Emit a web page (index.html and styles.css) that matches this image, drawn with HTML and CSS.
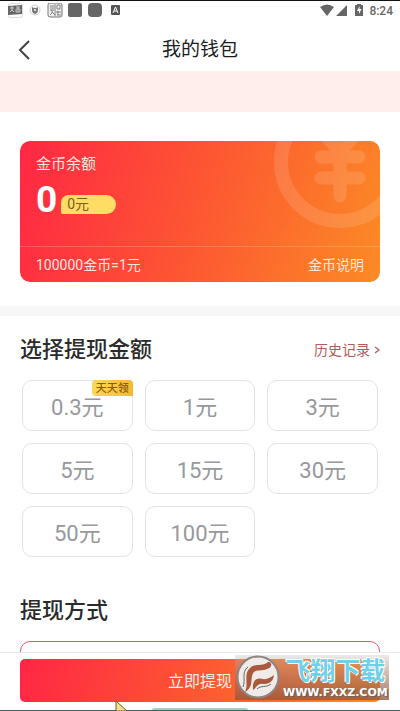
FILE: index.html
```html
<!DOCTYPE html>
<html lang="zh-CN">
<head>
<meta charset="utf-8">
<meta name="viewport" content="width=device-width, initial-scale=1">
<title>我的钱包</title>
<link rel="stylesheet" href="styles.css">
</head>
<body>
<div class="status">
  <svg class="status-left" width="112" height="16" viewBox="0 0 112 16" aria-hidden="true">
    <rect x=".5" y=".5" width="14" height="14" rx="2" fill="#fafafa" stroke="#ddd"/>
    <path d="M0 3l14-1v9l-14 1z" fill="#666"/>
    <path d="M2 5h4M4 3v4l-2 2M4 7l2 2M8 4h4M8 6h4v3H8zM10 4v5" stroke="#ddd" fill="none" stroke-width=".8"/>
    <circle cx="27" cy="7" r="5" fill="#fff" stroke="#ccc"/>
    <path d="M24 4q3 2 6 0v3q0 3-3 4-3-1-3-4z" fill="#777"/><path d="M26 6h2v2h-2z" fill="#ddd"/>
    <rect x="40" y="0" width="14" height="14" rx="2" fill="#eee" stroke="#777"/>
    <path d="M42 3h4M42 5h4M42 7h4M44 7v3l-2 2M44 9l3 3M49 2h3v4h-3zM50 8v4M48 9h5M49 12h4M47 1v12" stroke="#777" stroke-width=".9" fill="none"/>
    <rect x="60" y="0" width="14" height="14" rx="2" fill="#666"/>
    <rect x="80" y="0" width="14" height="14" rx="4" fill="#666"/>
    <rect x="103" y="2" width="9" height="10" rx="1" fill="#555"/>
    <path d="M105 10l2.500-6 2.500 6M106 8h3" stroke="#fff" fill="none"/>
  </svg>
  <div class="status-right">
    <svg width="43" height="14" viewBox="0 0 43 14" aria-hidden="true">
      <path d="M0 4Q7-1 14 4L7 13z M27 2v11H16z" fill="#666"/>
      <path d="M35 2h2V1h4v1h2v11h-8z" fill="#666"/>
      <path d="M39.500 3L37 8h2v3l2.500-5h-2z" fill="#fff"/>
    </svg>
    <span>8:24</span>
  </div>
</div>
<header class="nav">
  <button class="back" type="button" aria-label="返回">
    <svg width="12" height="20" viewBox="0 0 12 20"><path d="M11 1L2 10l9 9" fill="none" stroke="#444" stroke-width="2"/></svg>
  </button>
  <h1>我的钱包</h1>
</header>
<main class="content">
  <div class="notice"></div>
  <section class="balance">
    <svg class="coin" width="132" height="132" viewBox="0 0 132 132" aria-hidden="true">
      <circle cx="66" cy="66" r="59" fill="none" stroke="#fff" stroke-width="14"/>
      <path d="M47 34l19 22 19-22M47 61h38M47 82h38M66 56v44" fill="none" stroke="#fff" stroke-width="13" stroke-linecap="round"/>
    </svg>
    <div class="balance-main">
      <h2>金币余额</h2>
      <div class="amount"><strong>0</strong><span class="cash">0元</span></div>
    </div>
    <div class="balance-foot"><span>100000金币=1元</span><a href="#coins">金币说明</a></div>
  </section>
  <div class="divider"></div>
  <section class="withdraw">
    <div class="heading">
      <h2>选择提现金额</h2>
      <a href="#history">历史记录<svg width="6" height="8" viewBox="0 0 6 8" aria-hidden="true"><path d="M1 1l4 3-4 3" fill="none" stroke="#b45a5a" stroke-width="1.300"/></svg></a>
    </div>
    <div class="options">
      <button type="button">0.3元<span class="tag">天天领</span></button>
      <button type="button">1元</button>
      <button type="button">3元</button>
      <button type="button">5元</button>
      <button type="button">15元</button>
      <button type="button">30元</button>
      <button type="button">50元</button>
      <button type="button">100元</button>
    </div>
  </section>
  <section class="method">
    <h2>提现方式</h2>
    <div class="method-box"></div>
  </section>
</main>
<footer class="bottom">
  <button class="submit" type="button">立即提现</button>
  <div class="watermark">
    <svg width="46" height="44" viewBox="0 0 46 44" aria-hidden="true">
      <circle cx="23" cy="22" r="20.500" fill="#f0eae8" stroke="#8d8583" stroke-width="2"/>
      <path d="M10 37C14 29 8 19 15 13c5-5 12-1 18-6 4-1 5 6-1 7-7 3-13-1-15 7-1 7 0 12-7 16z" fill="#a9593d"/>
      <path d="M18 35c-1-9 3-13 10-11 4 1 8-2 11-4-1 8-6 9-11 9-5-1-6 3-10 6z" fill="#a9593d"/>
      <path d="M8 32C11 25 6 17 13 12M22 34c4-4 9-1 14-5" stroke="#666" fill="none"/>
    </svg>
    <div class="mark-text"><b>飞翔下载</b><span>WWW.FXXZ.COM</span></div>
  </div>
  <div class="home"></div>
  <svg class="pointer" width="14" height="10" viewBox="0 0 14 10" aria-hidden="true"><path d="M1 0v10h11z" fill="#f8df83" stroke="#665b3a"/></svg>
</footer>
</body>
</html>
```
FILE: styles.css
```css
* { box-sizing: border-box; }
body {
  margin: 0;
  height: 100vh;
  display: flex;
  flex-direction: column;
  overflow: hidden;
  background: #fff;
  color: #2b2b2b;
  font-family: Roboto, "Noto Sans CJK SC", sans-serif;
}
h1, h2 { margin: 0; }
button { font-family: inherit; padding: 0; border: 0; cursor: pointer; }
a { text-decoration: none; }
svg { display: block; flex: none; }

.status {
  flex: none;
  height: 20px;
  padding: 2px 7px 0 8px;
  border-top: 1px solid #111;
  display: flex;
  justify-content: space-between;
}
.status-right {
  display: flex;
  gap: 6px;
  color: #666;
  font-size: 12px;
  font-weight: 500;
  line-height: 16px;
}
.nav {
  flex: none;
  height: 51px;
  padding: 8px 18px 0;
  display: grid;
  grid-template-columns: 24px 1fr 24px;
  align-items: center;
}
.nav h1 {
  text-align: center;
  color: #1c1c1c;
  font-size: 19px;
  font-weight: 400;
  line-height: 28px;
}
.back { background: none; height: 28px; display: flex; align-items: center; }

.content { flex: 1; min-height: 0; overflow: hidden; }
.notice { height: 41px; background: #ffeeec; }
.balance {
  position: relative;
  margin: 29px 20px 24px;
  border-radius: 10px;
  overflow: hidden;
  background: linear-gradient(105deg, #ff2744, #fd5732 50%, #fb8b25);
  color: #ffe5de;
}
.coin { position: absolute; right: -26px; top: -45px; opacity: .12; }
.balance-main { height: 105px; padding: 11px 16px 0; }
.balance h2 { font-size: 15px; font-weight: 400; line-height: 24px; }
.amount { display: flex; align-items: flex-end; gap: 4px; }
.amount strong { color: #fff; font-size: 37px; line-height: 48px; }
.cash {
  width: 55px;
  height: 19px;
  margin-bottom: 10px;
  padding-left: 6px;
  border-radius: 8px 10px 10px 2px;
  background: #ffdc63;
  color: #80601d;
  font-size: 14px;
  line-height: 19px;
}
.balance-foot {
  height: 36px;
  padding: 0 16px;
  border-top: 1px solid rgba(255, 255, 255, .2);
  display: flex;
  justify-content: space-between;
  font-size: 14px;
  line-height: 36px;
}
.balance-foot a { color: inherit; }
.divider { height: 10px; background: #f7f7f7; }

.withdraw { padding: 18px 20px 0; }
.heading { display: flex; justify-content: space-between; align-items: center; }
.heading h2, .method h2 { font-size: 22px; font-weight: 500; line-height: 32px; }
.heading a {
  display: flex;
  align-items: center;
  gap: 4px;
  color: #b45a5a;
  font-size: 14px;
  line-height: 28px;
}
.options {
  margin: 14px 2px 0;
  display: grid;
  grid-template-columns: repeat(3, 1fr);
  gap: 12px;
}
.options button {
  position: relative;
  height: 51px;
  padding-bottom: 2px;
  border: 1px solid #e3e3e4;
  border-radius: 10px;
  background: #fff;
  color: #96989c;
  font-size: 22px;
}
.tag {
  position: absolute;
  top: -1px;
  right: -1px;
  width: 41px;
  height: 16px;
  border-radius: 4px 4px 0 4px;
  background: linear-gradient(90deg, #fcd65c, #f5b92f);
  color: #8a5a10;
  font-size: 11px;
  font-weight: 500;
  line-height: 17px;
}
.method { padding: 38px 20px 0; }
.method-box {
  height: 60px;
  margin-top: 14px;
  border: 1px solid #dc5a6a;
  border-radius: 10px;
}

.bottom {
  position: relative;
  flex: none;
  padding: 6px 20px 8px;
  border-top: 1px solid #e8e8e8;
  border-bottom: 1px solid #32665c;
  background: #fff;
}
.submit {
  display: block;
  width: 100%;
  height: 43px;
  padding-bottom: 2px;
  border-radius: 5px;
  background: linear-gradient(100deg, #ff2744, #fd5732 50%, #fb8b25);
  color: #ffece6;
  font-size: 16px;
}
.watermark {
  position: absolute;
  top: 2px;
  right: 11px;
  width: 154px;
  height: 45px;
  display: flex;
  gap: 2px;
  background: linear-gradient(rgba(200, 195, 190, .35), rgba(150, 85, 60, .8));
}
.mark-text { display: flex; flex-direction: column; align-items: center; }
.mark-text b {
  color: #6fd0e8;
  font-size: 25px;
  font-weight: 700;
  line-height: 34px;
  text-shadow: 1px 1px #fff, -1px -1px #fff, 1px -1px #fff;
}
.mark-text span {
  color: #fff;
  font-family: "DejaVu Sans", sans-serif;
  font-size: 11px;
  font-weight: 700;
  line-height: 8px;
  text-shadow: 1px 1px #666;
}
.home {
  position: absolute;
  bottom: 0;
  left: 38%;
  width: 24%;
  height: 2px;
  border-radius: 2px 2px 0 0;
  background: #a6cfc2;
}
.pointer { position: absolute; left: 115px; bottom: -1px; }
```
